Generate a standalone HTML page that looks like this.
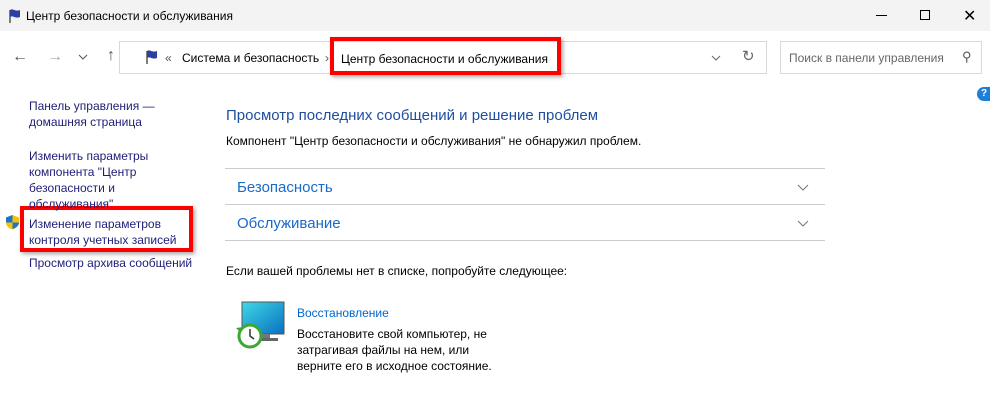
<!DOCTYPE html>
<html><head><meta charset="utf-8"><style>
*{margin:0;padding:0;box-sizing:border-box}
body{width:990px;height:420px;background:#fff;font-family:"Liberation Sans","Noto Sans CJK SC",sans-serif;font-size:12px;color:#000;position:relative;overflow:hidden}
.a{position:absolute;white-space:nowrap}
.nav{color:#1e1e78;line-height:16px}
.blue{color:#0066cc}
.red{position:absolute;border:4px solid #f00;box-shadow:2px 2px 4px rgba(0,0,0,.35)}
</style></head><body>
<div class="a" style="left:0;top:0;width:990px;height:31px;background:#f3f3f3"></div>
<svg class="a" style="left:7px;top:8px" width="16" height="16" viewBox="0 0 16 16"><path d="M3 2v13" stroke="#555" stroke-width="1.5"/><path d="M3 2c3-2 5 2 10 0v7c-5 2-7-2-10 0z" fill="#2d3fa0"/></svg>
<div class="a" style="left:26px;top:9px;font-size:12px">Центр безопасности и обслуживания</div>
<div class="a" style="left:876px;top:15px;width:11px;height:1px;background:#000"></div>
<div class="a" style="left:920px;top:10px;width:10px;height:10px;border:1px solid #000"></div>
<div class="a" style="left:963px;top:6px;font-size:16px">✕</div>
<div class="a" style="left:12px;top:48px;font-size:16px;color:#555">←</div>
<div class="a" style="left:47px;top:48px;font-size:16px;color:#aaa">→</div>
<svg class="a" style="left:78px;top:54px" width="10" height="6"><path d="M1 1l4 4 4-4" stroke="#555" fill="none"/></svg>
<div class="a" style="left:107px;top:47px;font-size:16px;color:#555">↑</div>
<div class="a" style="left:119px;top:41px;width:648px;height:33px;border:1px solid #d9d9d9"></div>
<svg class="a" style="left:144px;top:49px" width="16" height="16" viewBox="0 0 16 16"><path d="M3 2v13" stroke="#555" stroke-width="1.5"/><path d="M3 2c3-2 5 2 10 0v7c-5 2-7-2-10 0z" fill="#2d3fa0"/></svg>
<div class="a" style="left:165px;top:51px;color:#555">«</div>
<div class="a" style="left:182px;top:51px">Система и безопасность</div>
<div class="a" style="left:325px;top:51px;color:#555">›</div>
<div class="a" style="left:341px;top:52px">Центр безопасности и обслуживания</div>
<div class="red" style="left:330px;top:37px;width:231px;height:38px"></div>
<svg class="a" style="left:711px;top:55px" width="10" height="6"><path d="M1 1l4 4 4-4" stroke="#666" fill="none"/></svg>
<div class="a" style="left:742px;top:47px;color:#666;font-size:15px">↻</div>
<div class="a" style="left:780px;top:41px;width:202px;height:33px;border:1px solid #d9d9d9"></div>
<div class="a" style="left:789px;top:51px;color:#666">Поиск в панели управления</div>
<div class="a" style="left:962px;top:49px;color:#555;font-size:13px">⚲</div>
<div class="a" style="left:977px;top:87px;width:13px;height:14px;border-radius:7px 0 0 7px;background:#1e7fd6;color:#fff;font-size:10px;font-weight:bold;padding-left:4px;line-height:14px">?</div>
<div class="red" style="left:20px;top:206px;width:173px;height:46px"></div>
<div class="a nav" style="left:29px;top:98px">Панель управления —<br>домашняя страница</div>
<div class="a nav" style="left:29px;top:148px">Изменить параметры<br>компонента "Центр<br>безопасности и<br>обслуживания"</div>
<svg class="a" style="left:5px;top:214px" width="15" height="16" viewBox="0 0 15 16"><path d="M7.5 1L1 3.5v5c0 3.5 3 6 6.5 7 3.5-1 6.5-3.5 6.5-7v-5z" fill="#f6c200"/><path d="M7.5 1L1 3.5v5h6.5zM7.5 8.5V15c3.5-1 6.5-3.5 6.5-6.5z" fill="#1a74d0"/></svg>
<div class="a nav" style="left:29px;top:216px">Изменение параметров<br>контроля учетных записей</div>
<div class="a nav" style="left:29px;top:255px">Просмотр архива сообщений</div>
<div class="a" style="left:226px;top:107px;font-size:15px;color:#1e4e9e">Просмотр последних сообщений и решение проблем</div>
<div class="a" style="left:226px;top:134px">Компонент "Центр безопасности и обслуживания" не обнаружил проблем.</div>
<div class="a" style="left:225px;top:168px;width:600px;height:1px;background:#ccc"></div>
<div class="a" style="left:237px;top:179px;font-size:15px;color:#1a6ac8">Безопасность</div>
<svg class="a" style="left:797px;top:184px" width="12" height="7"><path d="M1 1l5 5 5-5" stroke="#777" fill="none"/></svg>
<div class="a" style="left:225px;top:204px;width:600px;height:1px;background:#ccc"></div>
<div class="a" style="left:237px;top:215px;font-size:15px;color:#1a6ac8">Обслуживание</div>
<svg class="a" style="left:797px;top:220px" width="12" height="7"><path d="M1 1l5 5 5-5" stroke="#777" fill="none"/></svg>
<div class="a" style="left:225px;top:240px;width:600px;height:1px;background:#ccc"></div>
<div class="a" style="left:226px;top:264px">Если вашей проблемы нет в списке, попробуйте следующее:</div>
<svg class="a" style="left:232px;top:300px" width="55" height="50" viewBox="0 0 55 50"><defs><linearGradient id="g" x1="0" y1="0" x2="1" y2="1"><stop offset="0" stop-color="#3fd8e6"/><stop offset="1" stop-color="#0a6fc0"/></linearGradient></defs><rect x="10" y="2" width="42" height="32" fill="url(#g)" stroke="#555"/><rect x="26" y="34" width="12" height="5" fill="#777"/><rect x="18" y="38" width="28" height="3" fill="#666"/><circle cx="18" cy="36" r="11" fill="#fff" stroke="#3aa832" stroke-width="3"/><path d="M18 29v7l4 3" stroke="#333" stroke-width="1.5" fill="none"/><path d="M4 28l4 4 3-5z" fill="#3aa832"/></svg>
<div class="a blue" style="left:297px;top:306px">Восстановление</div>
<div class="a" style="left:297px;top:326px;line-height:16px">Восстановите свой компьютер, не<br>затрагивая файлы на нем, или<br>верните его в исходное состояние.</div>
</body></html>
